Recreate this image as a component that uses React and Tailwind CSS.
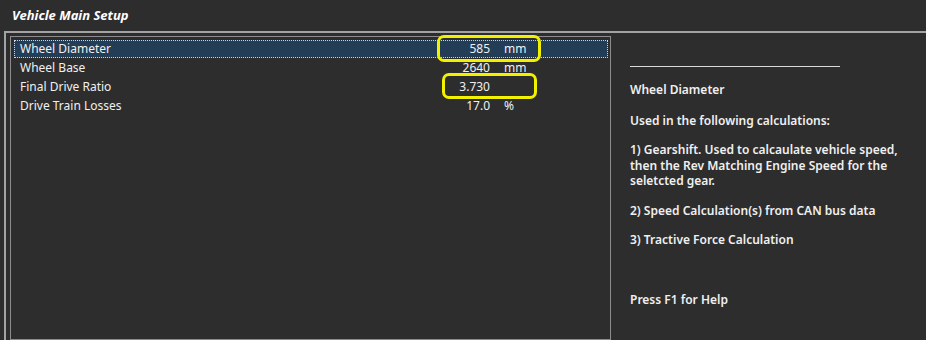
const rows = [
  { label: 'Wheel Diameter', value: '585', unit: 'mm', selected: true, ring: 'wide' },
  { label: 'Wheel Base', value: '2640', unit: 'mm' },
  { label: 'Final Drive Ratio', value: '3.730', unit: '', ring: 'narrow' },
  { label: 'Drive Train Losses', value: '17.0', unit: '%' },
];

function Row({ row }) {
  return (
    <div className="relative h-[19px] flex items-center">
      {row.selected && (
        <div className="absolute inset-x-[2px] top-[1px] bottom-0 bg-[#243d57] outline-1 outline-dotted outline-[#c8d4e0] -outline-offset-1" />
      )}
      <span className="relative w-[410px] pl-[8px]">{row.label}</span>
      <span className="relative w-[68px] text-right">{row.value}</span>
      <span className="relative pl-[14px]">{row.unit}</span>
      {row.ring === 'wide' && (
        <div className="absolute left-[425px] top-[-4px] w-[104px] h-[27px] border-[3px] border-[#f2f200] rounded-[7px]" />
      )}
      {row.ring === 'narrow' && (
        <div className="absolute left-[430px] top-[-4px] w-[95px] h-[26px] border-[3px] border-[#f2f200] rounded-[7px]" />
      )}
    </div>
  );
}

export default function App() {
  return (
    <div className="h-[340px] w-[926px] overflow-hidden bg-[#2d2d2d] text-[#f0f0f0] text-[12px] font-['Noto_Sans','Open_Sans',sans-serif] flex flex-col">
      <div className="h-[31px] flex items-center pl-[12px]">
        <h1 className="text-[13px] font-bold italic text-white">Vehicle Main Setup</h1>
      </div>
      <div className="flex-1 ml-[4px] border-t-2 border-l-2 border-[#a3a3a3] flex pt-[3px] pl-[4px]">
        <div className="w-[601px] border border-[#8c8c8c] pt-[2px] pl-[1px]">
          {rows.map((r) => (
            <Row key={r.label} row={r} />
          ))}
        </div>
        <div className="flex-1 pl-[19px] pt-[30px] font-semibold leading-[15.5px]">
          <div className="w-[210px] border-t border-[#d8d8d8]" />
          <p className="mt-[15px]">Wheel Diameter</p>
          <p className="mt-[15px]">Used in the following calculations:</p>
          <p className="mt-[14px]">
            1) Gearshift. Used to calcaulate vehicle speed,
            <br />
            then the Rev Matching Engine Speed for the
            <br />
            seletcted gear.
          </p>
          <p className="mt-[14px]">2) Speed Calculation(s) from CAN bus data</p>
          <p className="mt-[14px]">3) Tractive Force Calculation</p>
          <p className="mt-[44px]">Press F1 for Help</p>
        </div>
      </div>
    </div>
  );
}
